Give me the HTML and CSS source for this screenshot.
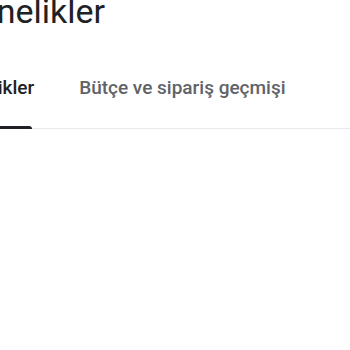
FILE: index.html
```html
<!DOCTYPE html>
<html lang="tr">
<head>
    <meta charset="UTF-8">
    <meta name="viewport" content="width=device-width, initial-scale=1.0">
    <title>Abonelikler</title>
    <link rel="stylesheet" href="styles.css">
</head>
<body>
    <div class="page">
        <h1 class="page-title">Abonelikler</h1>

        <nav class="tabs">
            <a class="tab active" href="#">Abonelikler</a>
            <a class="tab" href="#">Bütçe ve sipariş geçmişi</a>
        </nav>
    </div>
</body>
</html>
```

FILE: styles.css
```css
body {
    margin: 0;
    background-color: #fff;
    font-family: 'Roboto', 'Liberation Sans', sans-serif;
    overflow: hidden;
}

.page {
    margin-left: -62px;
}

.page-title {
    margin: -9px 0 0 -2px;
    font-size: 34px;
    line-height: 40px;
    font-weight: 400;
    color: #202124;
}

.tabs {
    display: flex;
    gap: 45px;
    margin-top: 45px;
    border-bottom: 1px solid #e8eaed;
}

.tab {
    position: relative;
    padding-bottom: 28px;
    font-size: 19px;
    line-height: 24px;
    font-weight: 500;
    color: #5f6368;
    text-decoration: none;
}

.tab.active {
    color: #202124;
}

.tab.active::after {
    content: '';
    position: absolute;
    left: 0;
    right: 2px;
    bottom: -1px;
    height: 3px;
    background-color: #202124;
    border-radius: 3px 3px 0 0;
}
```
